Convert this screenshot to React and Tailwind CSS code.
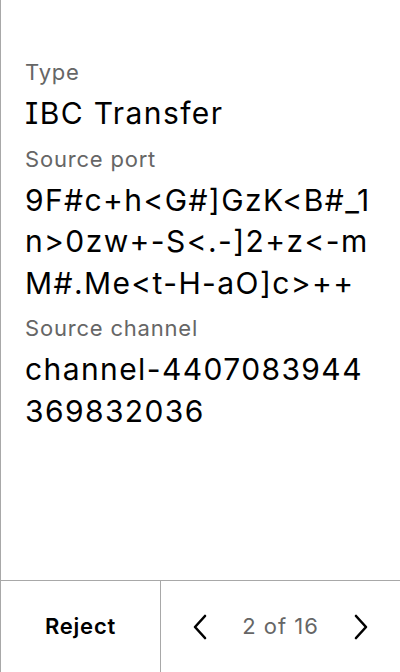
import React from "react";

const fields = [
    {label: "Type", value: "IBC Transfer"},
    {label: "Source port", value: "9F#c+h<G#]GzK<B#_1n>0zw+-S<.-]2+z<-mM#.Me<t-H-aO]c>++"},
    {label: "Source channel", value: "channel-4407083944369832036"},
];

const Chevron = ({dir}) => (
    <svg width="16" height="26" viewBox="0 0 16 26" fill="none" stroke="currentColor" strokeWidth="2.6" strokeLinecap="round" strokeLinejoin="round">
        {dir === "left" ? <polyline points="13,2 3,13 13,24" /> : <polyline points="3,2 13,13 3,24" />}
    </svg>
);

const App = () => {
    return (
        <div className="h-[672px] w-[400px] flex flex-col bg-white border-l border-[#a8a8a8] font-['Inter',sans-serif] text-black [font-feature-settings:'cv08'_1,'calt'_0,'liga'_0]">
            {/* Message details */}
            <div className="flex-1 pl-6 pr-[22px] pt-[58px]">
                {fields.map(f => (
                    <div key={f.label} className="mb-[10px]">
                        <p className="text-[22px] leading-[28px] tracking-[0.8px] text-[#666666]">{f.label}</p>
                        <p className="mt-[7px] text-[30px] leading-[41.5px] tracking-[1.4px] break-all">{f.value}</p>
                    </div>
                ))}
            </div>

            {/* Footer */}
            <div className="h-[92px] flex border-t border-[#a8a8a8]">
                <button className="w-[160px] border-r border-[#a8a8a8] text-[22px] font-semibold tracking-[0.8px]">
                    Reject
                </button>
                <div className="flex-1 flex items-center justify-between px-[31px]">
                    <Chevron dir="left" />
                    <span className="text-[22px] tracking-[1px] text-[#666666]">2 of 16</span>
                    <Chevron dir="right" />
                </div>
            </div>
        </div>
    );
};

export default App;
